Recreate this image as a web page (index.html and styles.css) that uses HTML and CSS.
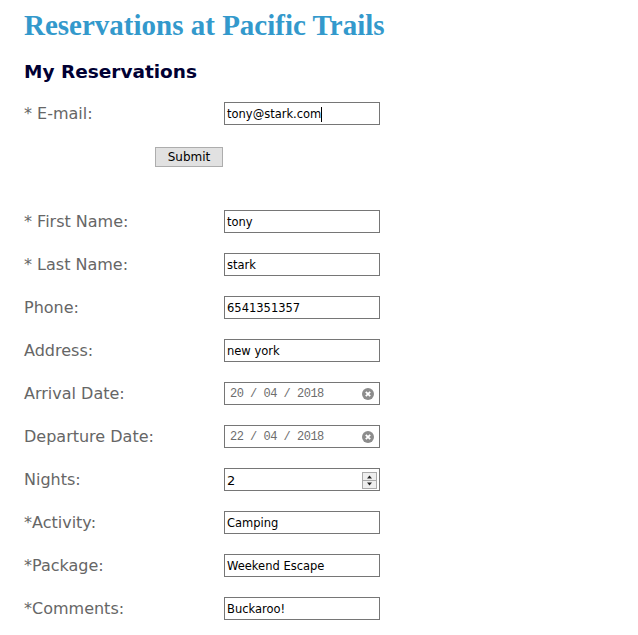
FILE: index.html
```html
<!DOCTYPE html>
<html>
<head>
<meta charset="utf-8">
<title>Reservations at Pacific Trails</title>
<link rel="stylesheet" href="styles.css">
</head>
<body>
<div class="page">
  <h1 class="title">Reservations at Pacific Trails</h1>
  <h2 class="subtitle">My Reservations</h2>
  <form class="form">
    <div class="row">
      <label class="label">* E-mail:</label>
      <div class="field"><span class="val">tony@stark.com</span><span class="caret"></span></div>
    </div>
    <div class="submit-row"><button type="button" class="btn">Submit</button></div>
    <div class="row">
      <label class="label">* First Name:</label>
      <div class="field"><span class="val">tony</span></div>
    </div>
    <div class="row">
      <label class="label">* Last Name:</label>
      <div class="field"><span class="val">stark</span></div>
    </div>
    <div class="row">
      <label class="label">Phone:</label>
      <div class="field"><span class="val">6541351357</span></div>
    </div>
    <div class="row">
      <label class="label">Address:</label>
      <div class="field"><span class="val">new york</span></div>
    </div>
    <div class="row">
      <label class="label">Arrival Date:</label>
      <div class="field date"><span class="dval">20 / 04 / 2018</span>
        <svg class="clear" width="12" height="12" viewBox="0 0 12 12"><circle cx="6" cy="6" r="6" fill="#8c8c8c"/><path d="M3.8 3.8L8.2 8.2M8.2 3.8L3.8 8.2" stroke="#fff" stroke-width="1.8"/></svg>
      </div>
    </div>
    <div class="row">
      <label class="label">Departure Date:</label>
      <div class="field date"><span class="dval">22 / 04 / 2018</span>
        <svg class="clear" width="12" height="12" viewBox="0 0 12 12"><circle cx="6" cy="6" r="6" fill="#8c8c8c"/><path d="M3.8 3.8L8.2 8.2M8.2 3.8L3.8 8.2" stroke="#fff" stroke-width="1.8"/></svg>
      </div>
    </div>
    <div class="row">
      <label class="label">Nights:</label>
      <div class="field num"><span class="nval">2</span>
        <svg class="spin" width="15" height="17" viewBox="0 0 15 17"><rect x="0.5" y="0.5" width="14" height="16" fill="#eee" stroke="#a9a9a9"/><line x1="1" y1="8.5" x2="14" y2="8.5" stroke="#a9a9a9"/><path d="M5 6.5L7.5 3.5L10 6.5Z" fill="#222"/><path d="M5 10.5L7.5 13.5L10 10.5Z" fill="#222"/></svg>
      </div>
    </div>
    <div class="row">
      <label class="label">*Activity:</label>
      <div class="field"><span class="val">Camping</span></div>
    </div>
    <div class="row">
      <label class="label">*Package:</label>
      <div class="field"><span class="val">Weekend Escape</span></div>
    </div>
    <div class="row">
      <label class="label">*Comments:</label>
      <div class="field"><span class="val">Buckaroo!</span></div>
    </div>
  </form>
</div>
</body>
</html>
```
FILE: styles.css
```css
* { box-sizing: border-box; }
body {
  margin: 0;
  background: #fff;
  font-family: "DejaVu Sans", Verdana, sans-serif;
}
.page {
  padding: 9px 24px 0 24px;
}
.title {
  margin: 0;
  font-family: "Liberation Serif", Georgia, serif;
  font-weight: bold;
  font-size: 29px;
  line-height: 32px;
  color: #3399cc;
}
.subtitle {
  margin: 19px 0 0 0;
  font-family: "DejaVu Sans", Verdana, sans-serif;
  font-weight: bold;
  font-size: 18.5px;
  line-height: 24px;
  color: #000033;
}
.form {
  margin-top: 18px;
}
.row {
  display: flex;
  align-items: center;
  height: 23px;
  margin-bottom: 20px;
}
.label {
  width: 200px;
  font-size: 16px;
  color: #666666;
}
.field {
  width: 156px;
  height: 23px;
  border: 1px solid #767676;
  display: flex;
  align-items: center;
  padding: 1px 2px 0 2px;
  font-family: "DejaVu Sans", Tahoma, sans-serif;
  font-size: 11.5px;
  color: #000;
}
.caret {
  width: 1px;
  height: 15px;
  background: #000;
}
.submit-row {
  height: 20px;
  margin: 22px 0 43px 131px;
}
.btn {
  display: block;
  width: 68px;
  height: 20px;
  padding: 0;
  border: 1px solid #adadad;
  background: #e1e1e1;
  font-family: "DejaVu Sans", Tahoma, sans-serif;
  font-size: 12px;
  color: #000;
}
.date {
  padding: 0 5px 0 5px;
  justify-content: space-between;
}
.dval {
  font-family: "Liberation Mono", "Courier New", monospace;
  font-size: 12px;
  letter-spacing: -0.5px;
  color: #6d6d6d;
}
.clear { display: block; }
.num {
  justify-content: space-between;
  padding: 1px 2px 0 2px;
}
.nval {
  font-size: 13px;
}
.spin { display: block; }
```
